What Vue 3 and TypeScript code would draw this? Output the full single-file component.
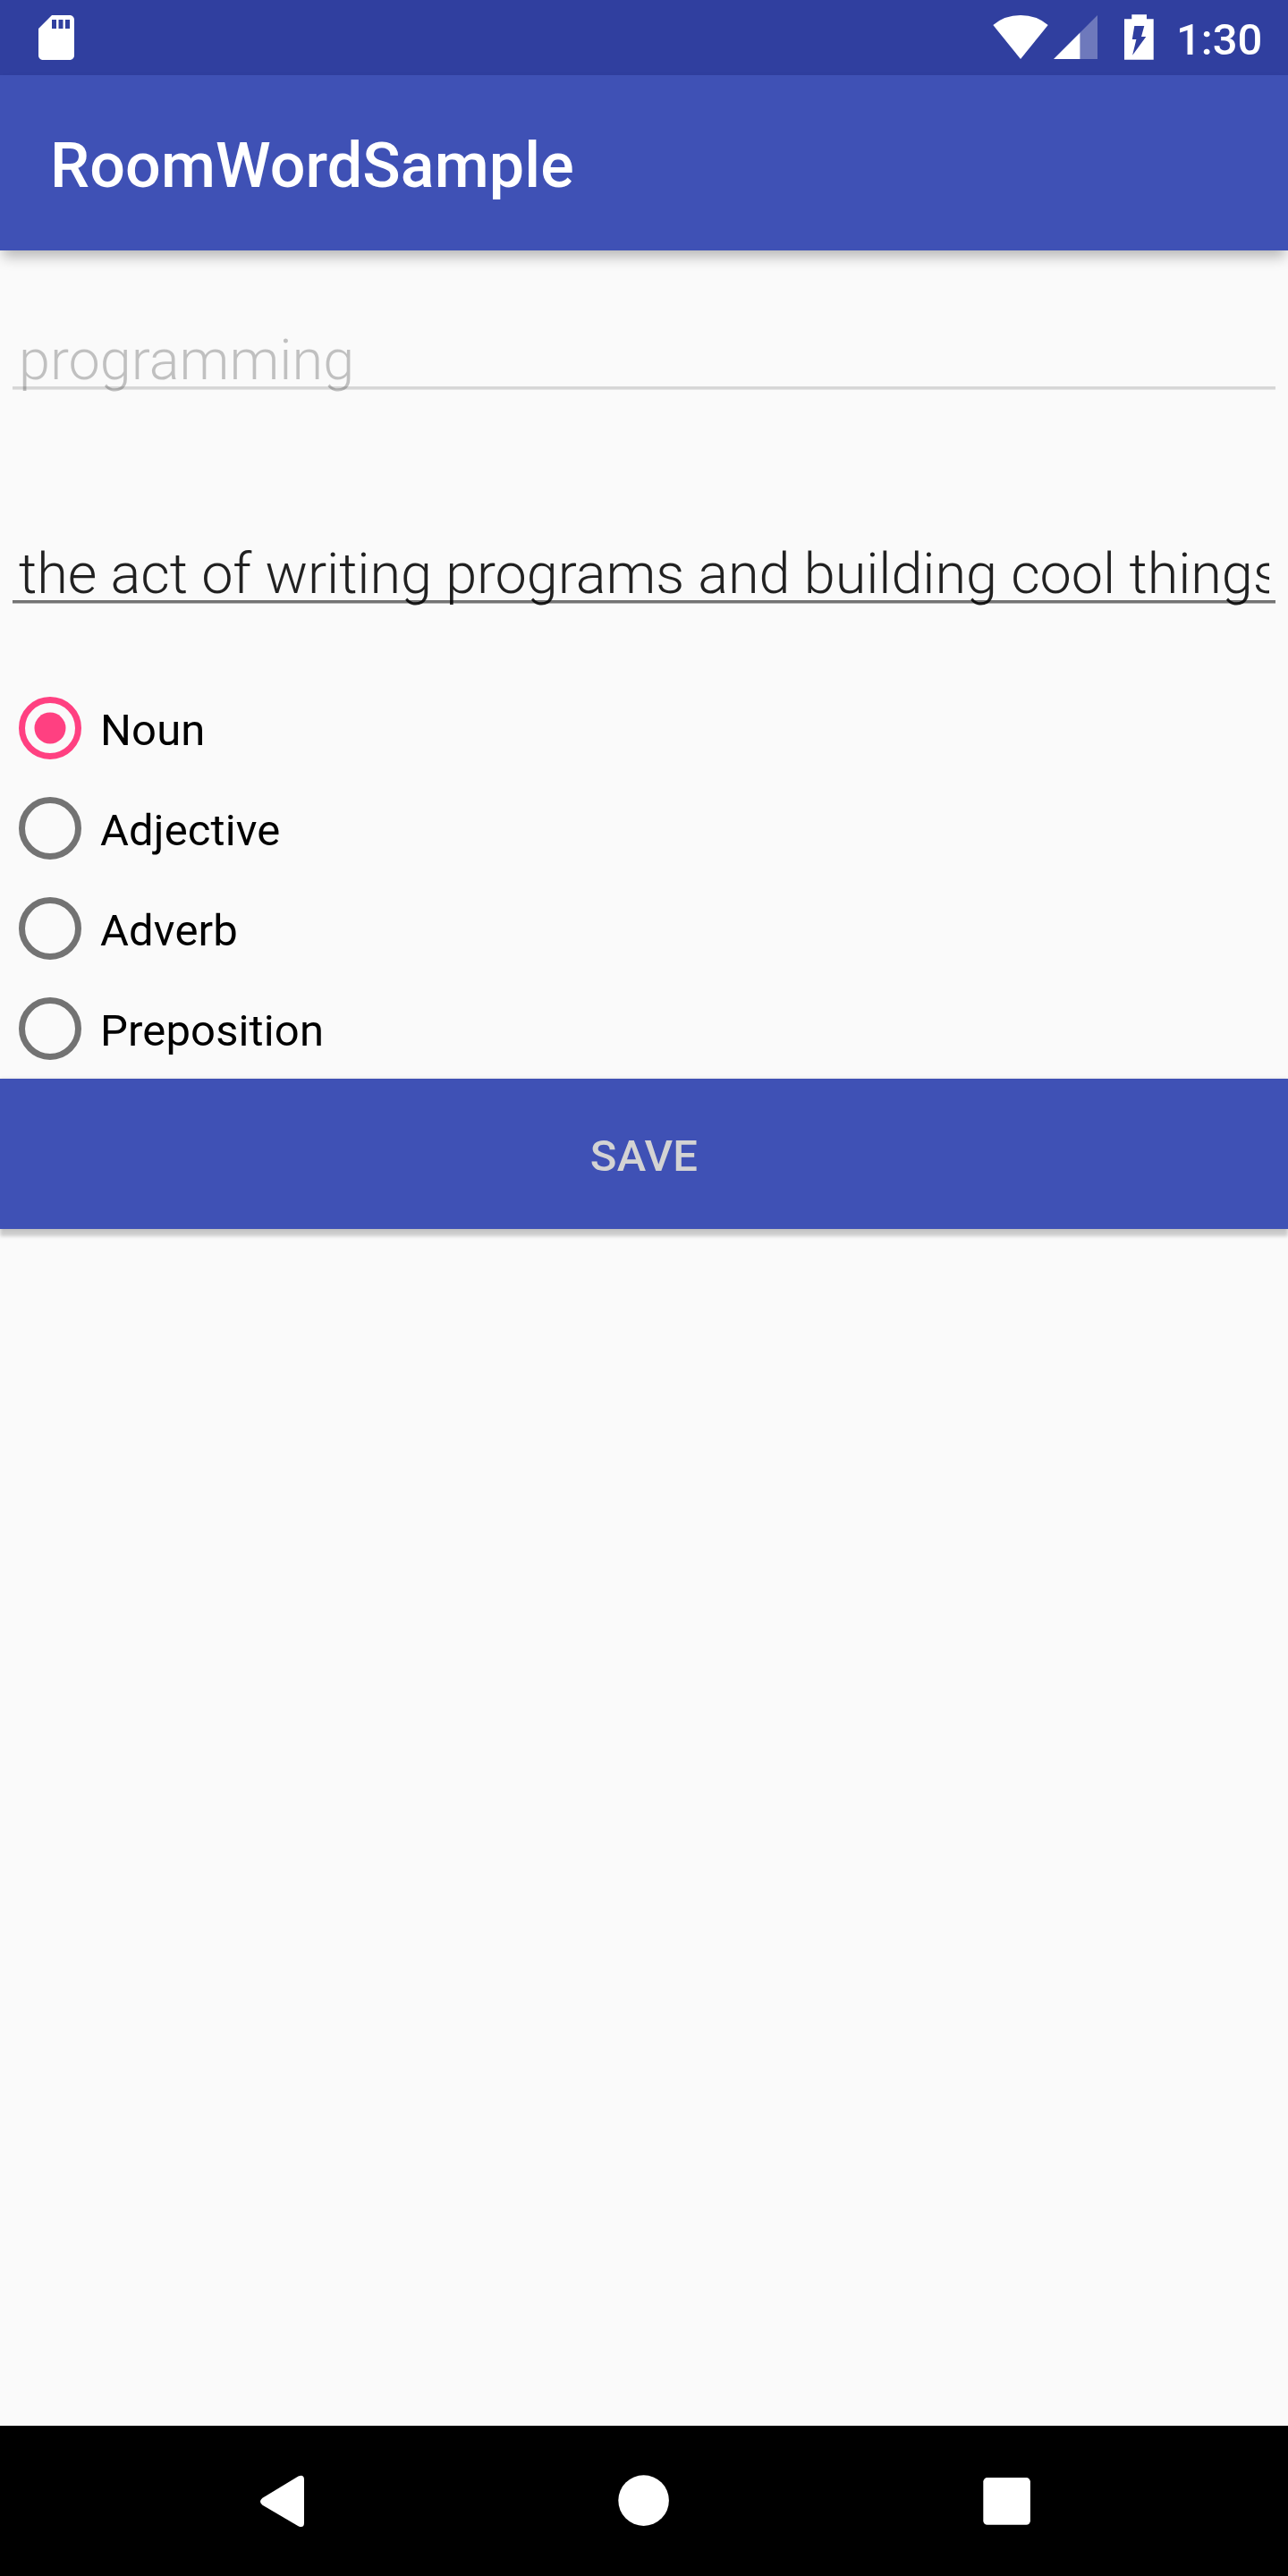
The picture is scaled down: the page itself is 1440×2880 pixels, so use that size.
<script setup lang="ts">
import { ref } from 'vue'

const wordHint = 'programming'
const definition = 'the act of writing programs and building cool things'
const kinds: string[] = ['Noun', 'Adjective', 'Adverb', 'Preposition']
const selected = ref<string>('Noun')
</script>

<template>
  <div class="screen">
    <header class="status">
      <svg class="sd" viewBox="0 0 24 24" width="60" height="60">
        <path d="M18 2h-8L4 8v12c0 1.1.9 2 2 2h12c1.1 0 2-.9 2-2V4c0-1.1-.9-2-2-2zm-6 6h-2V4h2v4zm3 0h-2V4h2v4zm3 0h-2V4h2v4z" fill="#fff" />
      </svg>
      <svg class="indicators" viewBox="0 0 190 84" width="190" height="84">
        <path d="M10.3 28Q23 17 41 17t30.7 11L41 66z" fill="#fff" />
        <path d="M127 17v49H107.500V36.500z" fill="#fff" fill-opacity=".3" />
        <path d="M107.500 36.500V66H78z" fill="#fff" />
        <path fill-rule="evenodd" d="M165.300 16.200h16.700v5h7.700v45.500h-32.700V21.200h8.300zM168.300 29l-2.500 15h4.600l-4.300 17.700L181.300 41H176l3.300-12z" fill="#fff" />
      </svg>
      <span class="clock">1:30</span>
    </header>

    <div class="appbar"><h1>RoomWordSample</h1></div>

    <main>
      <div class="field hint"><span class="text">{{ wordHint }}</span></div>
      <div class="field"><span class="text">{{ definition }}</span></div>

      <div class="kinds" role="radiogroup">
        <div
          v-for="kind in kinds"
          :key="kind"
          class="kind"
          :class="{ checked: kind === selected }"
          role="radio"
          :aria-checked="kind === selected"
          @click="selected = kind"
        >
          <svg viewBox="0 0 70 70" width="70" height="70">
            <circle cx="35" cy="35" r="31.5" fill="none" stroke="currentColor" stroke-width="7" />
            <circle v-if="kind === selected" cx="35" cy="35" r="17.5" fill="currentColor" />
          </svg>
          <span>{{ kind }}</span>
        </div>
      </div>

      <button class="save" type="button">SAVE</button>
    </main>

    <nav>
      <svg viewBox="0 0 64 64" width="64" height="64">
        <path d="M49.5 4.6Q56 2 56 8.500V56.500Q56 63 49.500 60.200L9.500 36.700Q4.500 32.800 9.500 28.700z" fill="#fff" />
      </svg>
      <svg viewBox="0 0 64 64" width="64" height="64">
        <circle cx="30.600" cy="31.600" r="28.300" fill="#fff" />
      </svg>
      <svg viewBox="0 0 64 64" width="64" height="64">
        <rect x="5.300" y="6.100" width="52.600" height="52.700" rx="4.500" fill="#fff" />
      </svg>
    </nav>
  </div>
</template>

<style>
body {
  margin: 0;
}
</style>

<style scoped>
.screen {
  width: 1440px;
  height: 2880px;
  display: flex;
  flex-direction: column;
  overflow: hidden;
  background: #fafafa;
  font-family: Roboto, sans-serif;
  color: #000;
}
svg {
  display: block;
  flex: none;
}
.status {
  height: 84px;
  flex: none;
  display: flex;
  background: #303f9f;
}
.sd {
  margin: 12px 0 0 33px;
}
.indicators {
  margin-left: 1007px;
}
.clock {
  margin-left: 25px;
  padding-top: 16px;
  font-size: 49px;
  line-height: 57px;
  font-weight: 500;
  color: #fff;
}
.appbar {
  height: 196px;
  flex: none;
  display: flex;
  align-items: center;
  padding-left: 56px;
  background: #3f51b5;
  box-shadow: 0 10px 14px -3px rgba(0, 0, 0, 0.27);
}
h1 {
  margin: 0;
  padding-top: 6px;
  font-size: 70px;
  line-height: 82px;
  font-weight: 500;
  letter-spacing: 0.13px;
  color: #fff;
}
main {
  flex: 1;
  display: flex;
  flex-direction: column;
}
.field {
  height: 96px;
  margin: 70px 14px 0;
  padding: 0 7px;
  background: linear-gradient(#737373, #737373) 0 81px / 100% 3px no-repeat,
    linear-gradient(#b5b5b5, #b5b5b5) 0 84px / 100% 1px no-repeat;
}
.field.hint {
  background: linear-gradient(#d6d6d6, #d6d6d6) 0 82px / 100% 3px no-repeat,
    linear-gradient(#e6e6e6, #e6e6e6) 0 85px / 100% 1px no-repeat;
}
.field + .field {
  margin-top: 144px;
}
.text {
  display: block;
  padding-top: 15px;
  height: 80px;
  overflow: hidden;
  white-space: nowrap;
  font-size: 63px;
  line-height: 73px;
  font-weight: 300;
  letter-spacing: -0.07px;
  color: rgba(0, 0, 0, 0.87);
}
.hint .text {
  padding-top: 16px;
  letter-spacing: 0;
  color: rgba(0, 0, 0, 0.23);
}
.kinds {
  margin-top: 72px;
}
.kind {
  height: 112px;
  display: flex;
  align-items: center;
  padding-left: 21px;
  font-size: 49px;
  line-height: 57px;
  letter-spacing: 0.13px;
}
.kind svg {
  color: #737373;
}
.kind.checked svg {
  color: #ff4081;
}
.kind span {
  margin-left: 21px;
  padding-top: 5px;
}
.save {
  height: 168px;
  flex: none;
  border: 0;
  padding: 5px 0 0;
  background: #3f51b5;
  color: #d3d3d3;
  font: 500 49px/57px Roboto, sans-serif;
  letter-spacing: 0.2px;
  box-shadow: 0 8px 4px rgba(0, 0, 0, 0.19), 0 0 4px rgba(0, 0, 0, 0.12);
}
nav {
  height: 168px;
  flex: none;
  display: flex;
  align-items: center;
  gap: 341px;
  padding-left: 284px;
  background: #000;
}
</style>
